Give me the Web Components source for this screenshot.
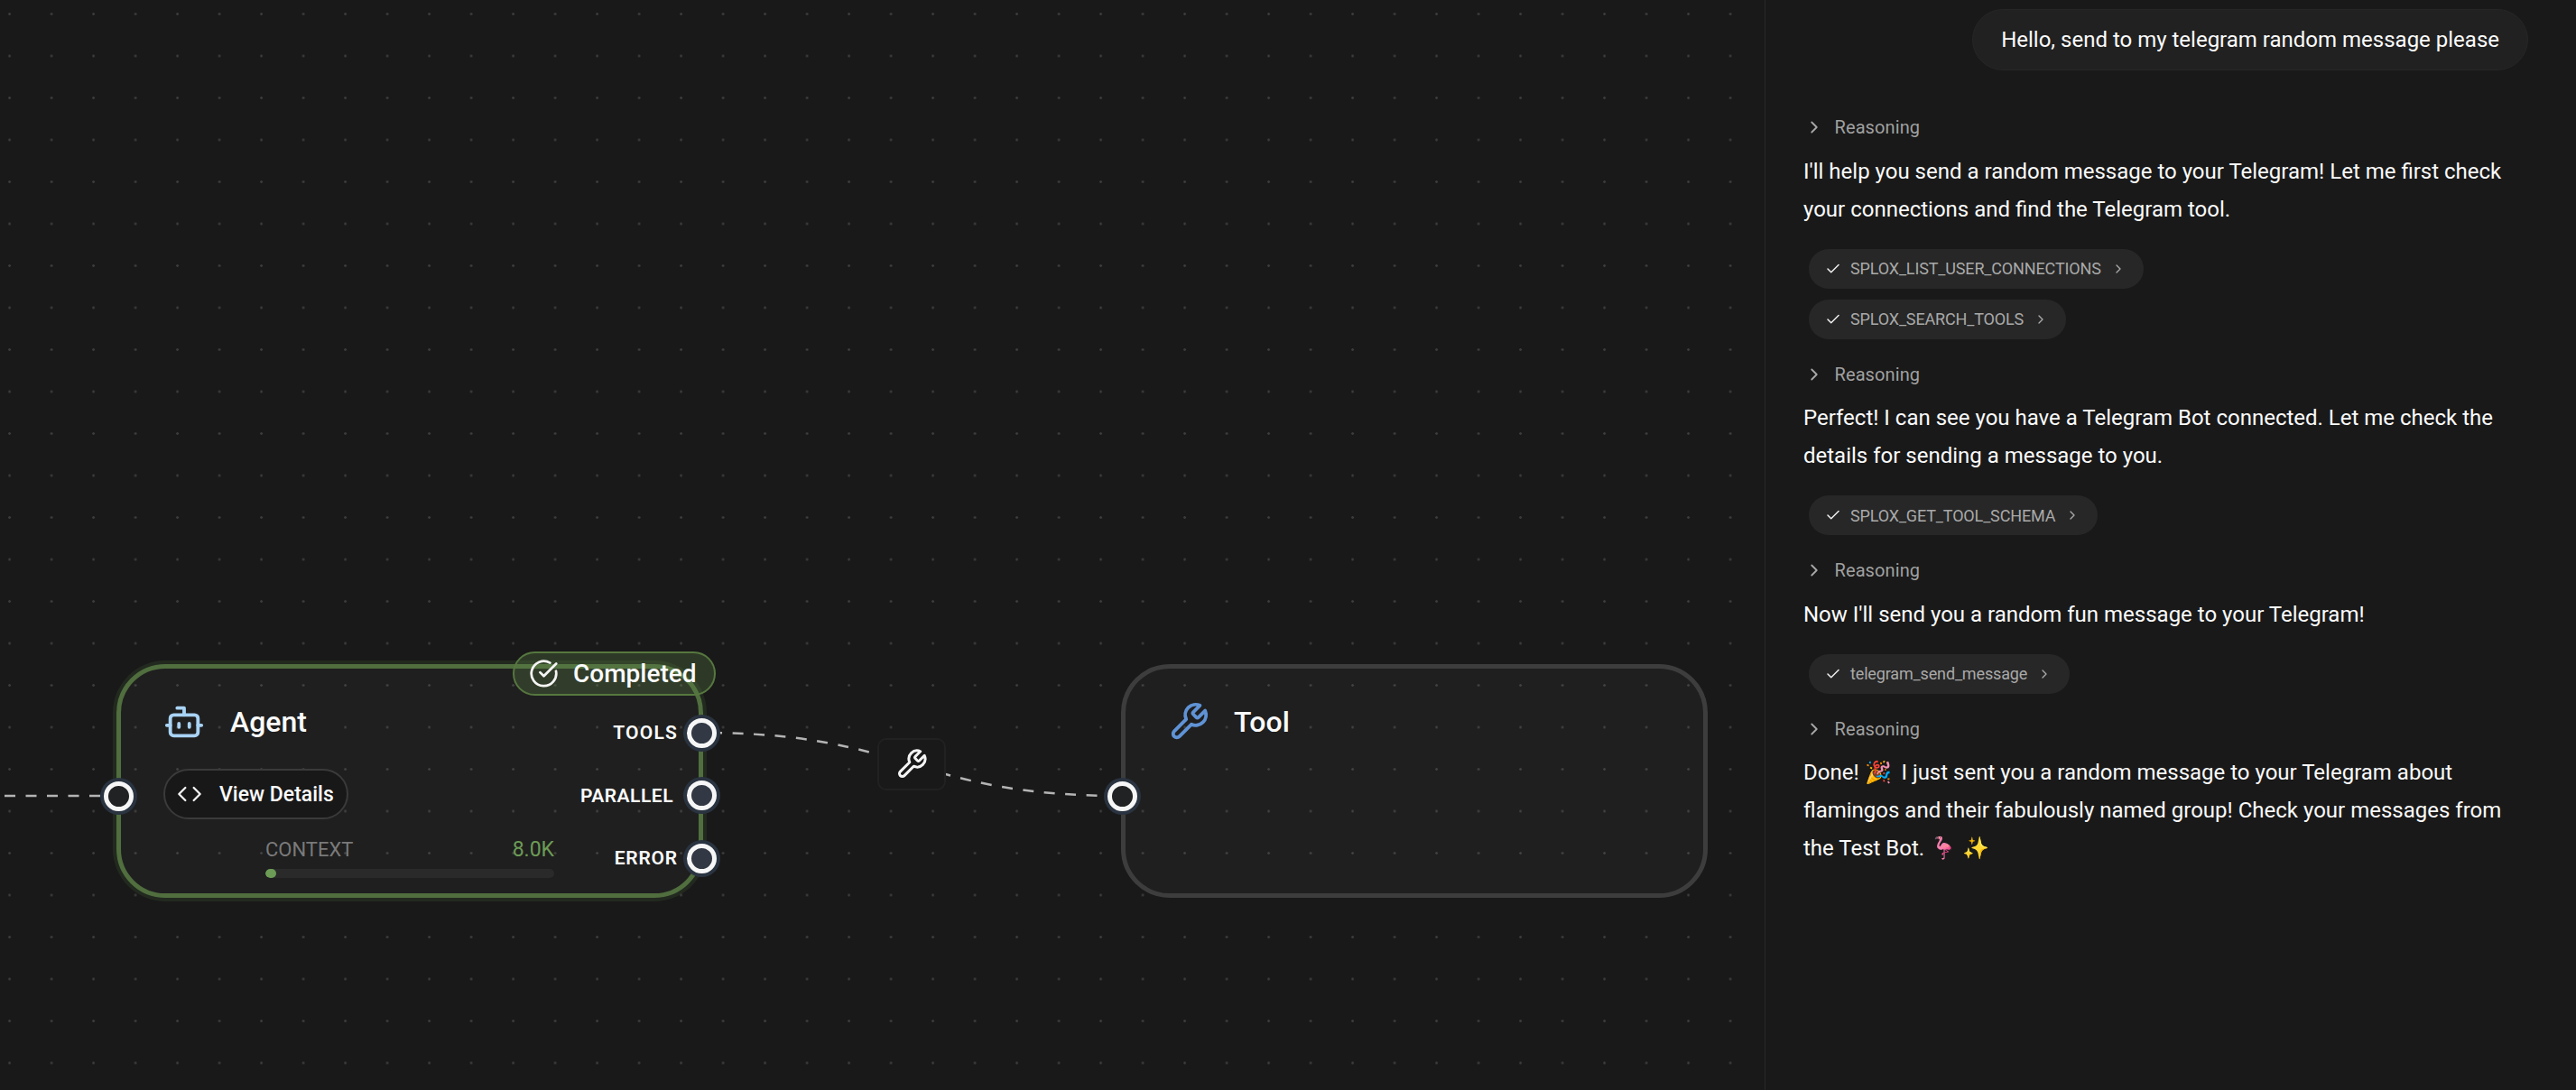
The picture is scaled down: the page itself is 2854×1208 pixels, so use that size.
<!doctype html>
<html>
<head>
<meta charset="utf-8">
<title>Flow</title>
<style>
  html, body { margin: 0; height: 100%; background: #191919; overflow: hidden; }
  body { font-family: Roboto, "Liberation Sans", sans-serif; color: #fafafa; }
</style>
</head>
<body>
<app-shell>
  <flow-canvas slot="canvas">
    <flow-node kind="agent" title="Agent" style="left:129px;top:736px;width:650px;height:259px">
      <flow-handle fill="#212224" style="position:absolute;left:-19.5px;top:124.5px"></flow-handle>
      <status-badge>Completed</status-badge>
      <view-button>View Details</view-button>
      <context-meter value="8.0K"></context-meter>
      <port-list>
        <flow-port style="--ls:1.2px">TOOLS</flow-port>
        <flow-port nudge="5">PARALLEL</flow-port>
        <flow-port style="--ls:.8px">ERROR</flow-port>
      </port-list>
    </flow-node>
    <edge-label></edge-label>
    <flow-node kind="tool" title="Tool" style="left:1242px;top:736px;width:650px;height:259px">
      <flow-handle fill="#212224" style="position:absolute;left:-20px;top:124.5px"></flow-handle>
    </flow-node>
  </flow-canvas>
  <chat-panel slot="panel">
    <chat-bubble>Hello, send to my telegram random message please</chat-bubble>
    <chat-turn>
      <reasoning-row>Reasoning</reasoning-row>
      <chat-text>I'll help you send a random message to your Telegram! Let me first check your connections and find the Telegram tool.</chat-text>
      <tool-chip>SPLOX_LIST_USER_CONNECTIONS</tool-chip>
      <tool-chip>SPLOX_SEARCH_TOOLS</tool-chip>
    </chat-turn>
    <chat-turn>
      <reasoning-row>Reasoning</reasoning-row>
      <chat-text>Perfect! I can see you have a Telegram Bot connected. Let me check the details for sending a message to you.</chat-text>
      <tool-chip>SPLOX_GET_TOOL_SCHEMA</tool-chip>
    </chat-turn>
    <chat-turn>
      <reasoning-row>Reasoning</reasoning-row>
      <chat-text>Now I'll send you a random fun message to your Telegram!</chat-text>
      <tool-chip>telegram_send_message</tool-chip>
    </chat-turn>
    <chat-turn>
      <reasoning-row>Reasoning</reasoning-row>
      <chat-text>Done! 🎉&#8201; I just sent you a random message to your Telegram about flamingos and their fabulously named group! Check your messages from the Test Bot. 🦩 ✨</chat-text>
    </chat-turn>
  </chat-panel>
</app-shell>

<script>
const FONT = 'Roboto, "Liberation Sans", sans-serif';

const ICONS = {
  bot: '<path d="M12 8V4H8"/><rect width="16" height="12" x="4" y="8" rx="2"/><path d="M2 14h2"/><path d="M20 14h2"/><path d="M15 13v2"/><path d="M9 13v2"/>',
  wrench: '<path d="M14.7 6.3a1 1 0 0 0 0 1.4l1.6 1.6a1 1 0 0 0 1.4 0l3.77-3.77a6 6 0 0 1-7.94 7.94l-6.91 6.91a2.12 2.12 0 0 1-3-3l6.91-6.91a6 6 0 0 1 7.94-7.94l-3.76 3.76z"/>',
  code: '<path d="m16 18 6-6-6-6"/><path d="m8 6-6 6 6 6"/>',
  circleCheck: '<path d="M21.801 10A10 10 0 1 1 17 3.335"/><path d="m9 11 3 3L22 4"/>',
  chevron: '<path d="m9 18 6-6-6-6"/>',
  check: '<path d="M20 6 9 17l-5-5"/>',
};

function icon(name, size, color) {
  return `<svg width="${size}" height="${size}" viewBox="0 0 24 24" fill="none" stroke="${color}" stroke-width="2" stroke-linecap="round" stroke-linejoin="round" style="flex:none;display:block">${ICONS[name]}</svg>`;
}

// small helper so every element below only has to give its markup
class Base extends HTMLElement {
  constructor() {
    super();
    this.shadow = this.attachShadow({ mode: 'open' });
  }

  connectedCallback() {
    this.shadow.innerHTML = this.template();
  }
}

class AppShell extends Base {
  template() {
    return `
      <style>
        :host { display: flex; width: 100vw; height: 100vh; font-family: ${FONT}; }
        .canvas { flex: 1; min-width: 0; display: flex; }
        .panel { width: 899px; flex: none; display: flex; }
      </style>
      <div class="canvas"><slot name="canvas"></slot></div>
      <div class="panel"><slot name="panel"></slot></div>`;
  }
}

class FlowCanvas extends Base {
  template() {
    return `
      <style>
        :host {
          display: block; flex: 1; position: relative; overflow: hidden;
          background-color: #191919;
          background-image: radial-gradient(circle, #3c3c3c 0, #3c3c3c 1.1px, transparent 1.6px);
          background-size: 46.5px 46.5px;
          background-position: -12.65px -7.75px;
        }
        svg { position: absolute; left: 0; top: 0; }
        path { fill: none; stroke: #b4b4b4; stroke-width: 2.5; }
      </style>
      <svg width="1955" height="1208">
        <path d="M0 882H131" stroke-dasharray="12 11.5" stroke-dashoffset="18.5"/>
        <path d="M777 812C1010 812 1010 882 1243 882" stroke-dasharray="12 11.5" stroke-dashoffset="12.5"/>
      </svg>
      <slot></slot>`;
  }
}

class FlowNode extends Base {
  template() {
    const kind = this.getAttribute('kind');
    const agent = kind === 'agent';
    const ic = agent ? icon('bot', 46, '#a9d3f5') : icon('wrench', 46, '#5f93d6');
    return `
      <style>
        :host {
          display: block; position: absolute; box-sizing: border-box;
          background: rgba(255,255,255,.028);
          border: 5px solid ${agent ? '#506e3e' : '#3d3d3d'};
          border-radius: 54px;
          ${agent ? 'box-shadow: 0 0 0 4px rgba(88,128,68,.16);' : ''}
          padding: 36px 47px 0;
        }
        .head { display: flex; align-items: center; gap: ${agent ? 28 : 27}px; height: 46px; }
        .title { font-size: 32px; font-weight: 500; color: #fafafa; line-height: 46px; }
      </style>
      <div class="head">${ic}<span class="title">${this.getAttribute('title')}</span></div>
      <slot></slot>`;
  }
}

class FlowHandle extends Base {
  template() {
    return `
      <style>
        :host {
          display: block; box-sizing: border-box; flex: none; z-index: 3;
          width: 33px; height: 33px; border-radius: 50%;
          border: 5.5px solid #f6f6f6;
          background: ${this.getAttribute('fill') || '#323945'};
          box-shadow: 0 0 0 4px #2a3340;
        }
      </style>`;
  }
}

class PortList extends Base {
  template() {
    return `
      <style>
        :host {
          position: absolute; right: -20px; top: 54.5px;
          display: flex; flex-direction: column; align-items: flex-end; gap: 36.5px;
        }
      </style>
      <slot></slot>`;
  }
}

class FlowPort extends Base {
  template() {
    const nudge = this.getAttribute('nudge') || 0;
    return `
      <style>
        :host { display: flex; align-items: center; height: 33px; }
        span {
          font-size: 21px; font-weight: 600; letter-spacing: var(--ls, .5px); color: #fafafa;
          margin-right: ${10 + Number(nudge)}px;
        }
      </style>
      <span><slot></slot></span>
      <flow-handle></flow-handle>`;
  }
}

class StatusBadge extends Base {
  template() {
    return `
      <style>
        :host {
          position: absolute; right: -19px; top: -19px; box-sizing: border-box;
          display: flex; align-items: center; gap: 16px;
          width: 225px; height: 49px; padding-left: 16px;
          background: rgba(92,134,70,.3);
          border: 2px solid #56773f; border-radius: 25px;
          font-size: 28px; font-weight: 500; color: #fafafa;
        }
      </style>
      ${icon('circleCheck', 33, '#f4f4f4')}<slot></slot>`;
  }
}

class ViewButton extends Base {
  template() {
    return `
      <style>
        :host {
          display: flex; align-items: center; gap: 19px; box-sizing: border-box;
          width: 205px; height: 56px; margin-top: 29px; padding-left: 13px;
          background: #181818; border: 2px solid #3a3a3a; border-radius: 28px;
          font-size: 23px; font-weight: 500; color: #fafafa; white-space: nowrap;
        }
      </style>
      ${icon('code', 28, '#f4f4f4')}<slot></slot>`;
  }
}

class ContextMeter extends Base {
  template() {
    return `
      <style>
        :host { display: block; width: 320px; margin: 21px 0 0 113px; }
        .row { display: flex; justify-content: space-between; align-items: baseline; line-height: 26px; }
        .label { color: #7a7a7a; font-size: 22px; }
        .value { color: #6c9c56; font-size: 23px; }
        .bar { height: 10px; margin-top: 8px; border-radius: 5px; background: #2a2a2a; overflow: hidden; }
        .fill { width: 12px; height: 100%; border-radius: 5px; background: #6c9c56; }
      </style>
      <div class="row"><span class="label">CONTEXT</span><span class="value">${this.getAttribute('value')}</span></div>
      <div class="bar"><div class="fill"></div></div>`;
  }
}

class EdgeLabel extends Base {
  template() {
    return `
      <style>
        :host {
          position: absolute; left: 972px; top: 818px; box-sizing: border-box;
          width: 76px; height: 58px;
          display: flex; align-items: center; justify-content: center;
          background: #191919; border: 2px solid #212121; border-radius: 10px;
        }
      </style>
      ${icon('wrench', 36, '#f4f4f4')}`;
  }
}

class ChatPanel extends Base {
  template() {
    return `
      <style>
        :host {
          display: flex; flex-direction: column; flex: 1; box-sizing: border-box;
          background: #191919; border-left: 1px solid #292929;
          padding: 10px 53px 0 42px;
        }
      </style>
      <slot></slot>`;
  }
}

class ChatBubble extends Base {
  template() {
    return `
      <style>
        :host {
          align-self: flex-end; display: block; box-sizing: border-box;
          height: 68px; line-height: 66px; padding: 0 31px; margin-bottom: 24px;
          background: #212121; border: 1px solid #262626; border-radius: 34px;
          font-size: 24px; color: #fafafa; white-space: nowrap;
        }
      </style>
      <slot></slot>`;
  }
}

class ChatTurn extends Base {
  template() {
    return `
      <style>
        :host { display: flex; flex-direction: column; align-items: flex-start; padding-top: 25px; }
      </style>
      <slot></slot>`;
  }
}

class ReasoningRow extends Base {
  template() {
    return `
      <style>
        :host {
          display: flex; align-items: center; gap: 11.5px; height: 28px;
          margin: 0 0 13.5px 1px; font-size: 20px; letter-spacing: .1px; color: #a0a0a0;
        }
      </style>
      ${icon('chevron', 22, '#a8a8a8')}<slot></slot>`;
  }
}

class ChatText extends Base {
  template() {
    return `
      <style>
        :host { display: block; font-size: 24px; line-height: 42px; color: #fafafa; margin-bottom: 11px; }
      </style>
      <slot></slot>`;
  }
}

class ToolChip extends Base {
  template() {
    return `
      <style>
        :host {
          display: flex; align-items: center; height: 44px; box-sizing: border-box;
          margin: 12px 0 0 6px; padding: 0 20px 0 18px;
          background: #272727; border-radius: 22px;
          font-size: 18px; letter-spacing: -.15px; color: #a9a9a9; white-space: nowrap;
        }
        .t { margin: 0 11px 0 10px; }
      </style>
      ${icon('check', 18, '#f0f0f0')}<span class="t"><slot></slot></span>${icon('chevron', 16, '#a9a9a9')}`;
  }
}

customElements.define('flow-handle', FlowHandle);
customElements.define('app-shell', AppShell);
customElements.define('flow-canvas', FlowCanvas);
customElements.define('flow-node', FlowNode);
customElements.define('port-list', PortList);
customElements.define('flow-port', FlowPort);
customElements.define('status-badge', StatusBadge);
customElements.define('view-button', ViewButton);
customElements.define('context-meter', ContextMeter);
customElements.define('edge-label', EdgeLabel);
customElements.define('chat-panel', ChatPanel);
customElements.define('chat-bubble', ChatBubble);
customElements.define('chat-turn', ChatTurn);
customElements.define('reasoning-row', ReasoningRow);
customElements.define('chat-text', ChatText);
customElements.define('tool-chip', ToolChip);
</script>
</body>
</html>
